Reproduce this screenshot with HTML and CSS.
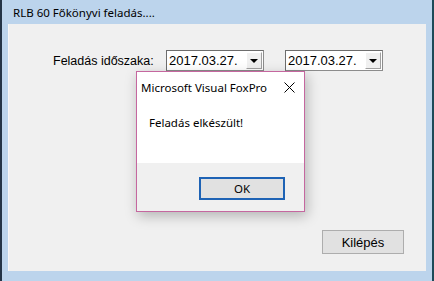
FILE: index.html
```html
<!DOCTYPE html>
<html>
<head>
<meta charset="utf-8">
<link rel="stylesheet" href="styles.css">
</head>
<body>
<div class="window">
  <div class="titlebar">RLB 60 Főkönyvi feladás....</div>
  <div class="client">
    <div class="period-row">
      <span class="period-label">Feladás időszaka:</span>
      <div class="combo"><span class="combo-text">2017.03.27.</span><span class="combo-btn"><span class="arrow"></span></span></div>
      <div class="combo"><span class="combo-text">2017.03.27.</span><span class="combo-btn"><span class="arrow"></span></span></div>
    </div>
    <div class="footer">
      <button class="btn-exit">Kilépés</button>
    </div>
    <div class="msgbox">
      <div class="msg-title">
        <span>Microsoft Visual FoxPro</span>
        <svg class="msg-close" width="11" height="11" viewBox="0 0 11 11"><path d="M0.5 0.5 L10.5 10.5 M10.5 0.5 L0.5 10.5" stroke="#000" stroke-width="1" fill="none"/></svg>
      </div>
      <div class="msg-body">Feladás elkészült!</div>
      <div class="msg-footer"><button class="btn-ok">OK</button></div>
    </div>
  </div>
</div>
</body>
</html>
```
FILE: styles.css
```css
html, body {
  margin: 0;
  padding: 0;
  background: #bcd4ec;
}
.window {
  width: 434px;
  height: 281px;
  box-sizing: border-box;
  background: #bcd4ec;
  border-left: 2px solid #243446;
  border-right: 2px solid #1d4a58;
  padding: 0 6px 10px 6px;
  display: flex;
  flex-direction: column;
}
.titlebar {
  height: 24px;
  flex: none;
  font-family: "Noto Sans", sans-serif;
  font-size: 11.5px;
  line-height: 26px;
  padding-left: 5px;
  color: #000;
}
.client {
  position: relative;
  flex: 1;
  background: #f0f0f0;
  border-left: 1px solid #f8f8f8;
  display: flex;
  flex-direction: column;
}
.period-row {
  display: flex;
  align-items: center;
  margin-top: 26px;
  padding-left: 44px;
  height: 21px;
}
.period-label {
  font-family: "Liberation Sans", Arial, sans-serif;
  font-size: 12.5px;
  color: #000;
  width: 113px;
}
.combo {
  box-sizing: border-box;
  width: 98px;
  height: 21px;
  background: #fff;
  border: 1px solid #8c8c8c;
  border-top-color: #6d6d6d;
  border-left-color: #6d6d6d;
  display: flex;
  align-items: center;
  margin-right: 21px;
}
.combo-text {
  flex: 1;
  font-family: "Liberation Sans", Arial, sans-serif;
  font-size: 13px;
  padding-left: 2px;
  color: #000;
}
.combo-btn {
  width: 16px;
  height: 17px;
  margin-right: 1px;
  box-sizing: border-box;
  background: #f0f0f0;
  border: 1px solid #a0a0a0;
  border-top-color: #fff;
  border-left-color: #fff;
  display: flex;
  align-items: center;
  justify-content: center;
}
.arrow {
  width: 0;
  height: 0;
  border-left: 4px solid transparent;
  border-right: 4px solid transparent;
  border-top: 4px solid #000;
  margin-top: 1px;
}
.footer {
  margin-top: auto;
  display: flex;
  justify-content: flex-end;
  padding: 0 22px 17px 0;
}
.btn-exit {
  width: 82px;
  height: 24px;
  background: #e1e1e1;
  border: 1px solid #adadad;
  font-family: "Liberation Sans", Arial, sans-serif;
  font-size: 13px;
  color: #000;
  padding: 0;
}
.msgbox {
  position: absolute;
  left: 127px;
  top: 47px;
  width: 169px;
  height: 141px;
  box-sizing: border-box;
  border: 1px solid #c5679f;
  background: #fff;
  box-shadow: 2px 4px 12px rgba(0,0,0,0.25);
  display: flex;
  flex-direction: column;
  font-family: "Noto Sans", sans-serif;
  font-size: 11.5px;
  color: #000;
}
.msg-title {
  height: 28px;
  display: flex;
  align-items: center;
  justify-content: space-between;
  padding: 0 9px 0 4px;
  margin-top: 1px;
}
.msg-close {
  display: block;
}
.msg-body {
  flex: 1;
  padding: 14px 0 0 12px;
}
.msg-footer {
  height: 48px;
  background: #f0f0f0;
  display: flex;
  justify-content: flex-end;
  align-items: flex-start;
  padding: 14px 19px 0 0;
  box-sizing: border-box;
}
.btn-ok {
  width: 86px;
  height: 23px;
  box-sizing: border-box;
  background: #e1e1e1;
  border: 2px solid #1e63b5;
  font-family: "Noto Sans", sans-serif;
  font-size: 11.5px;
  color: #000;
  padding: 0;
}
```
